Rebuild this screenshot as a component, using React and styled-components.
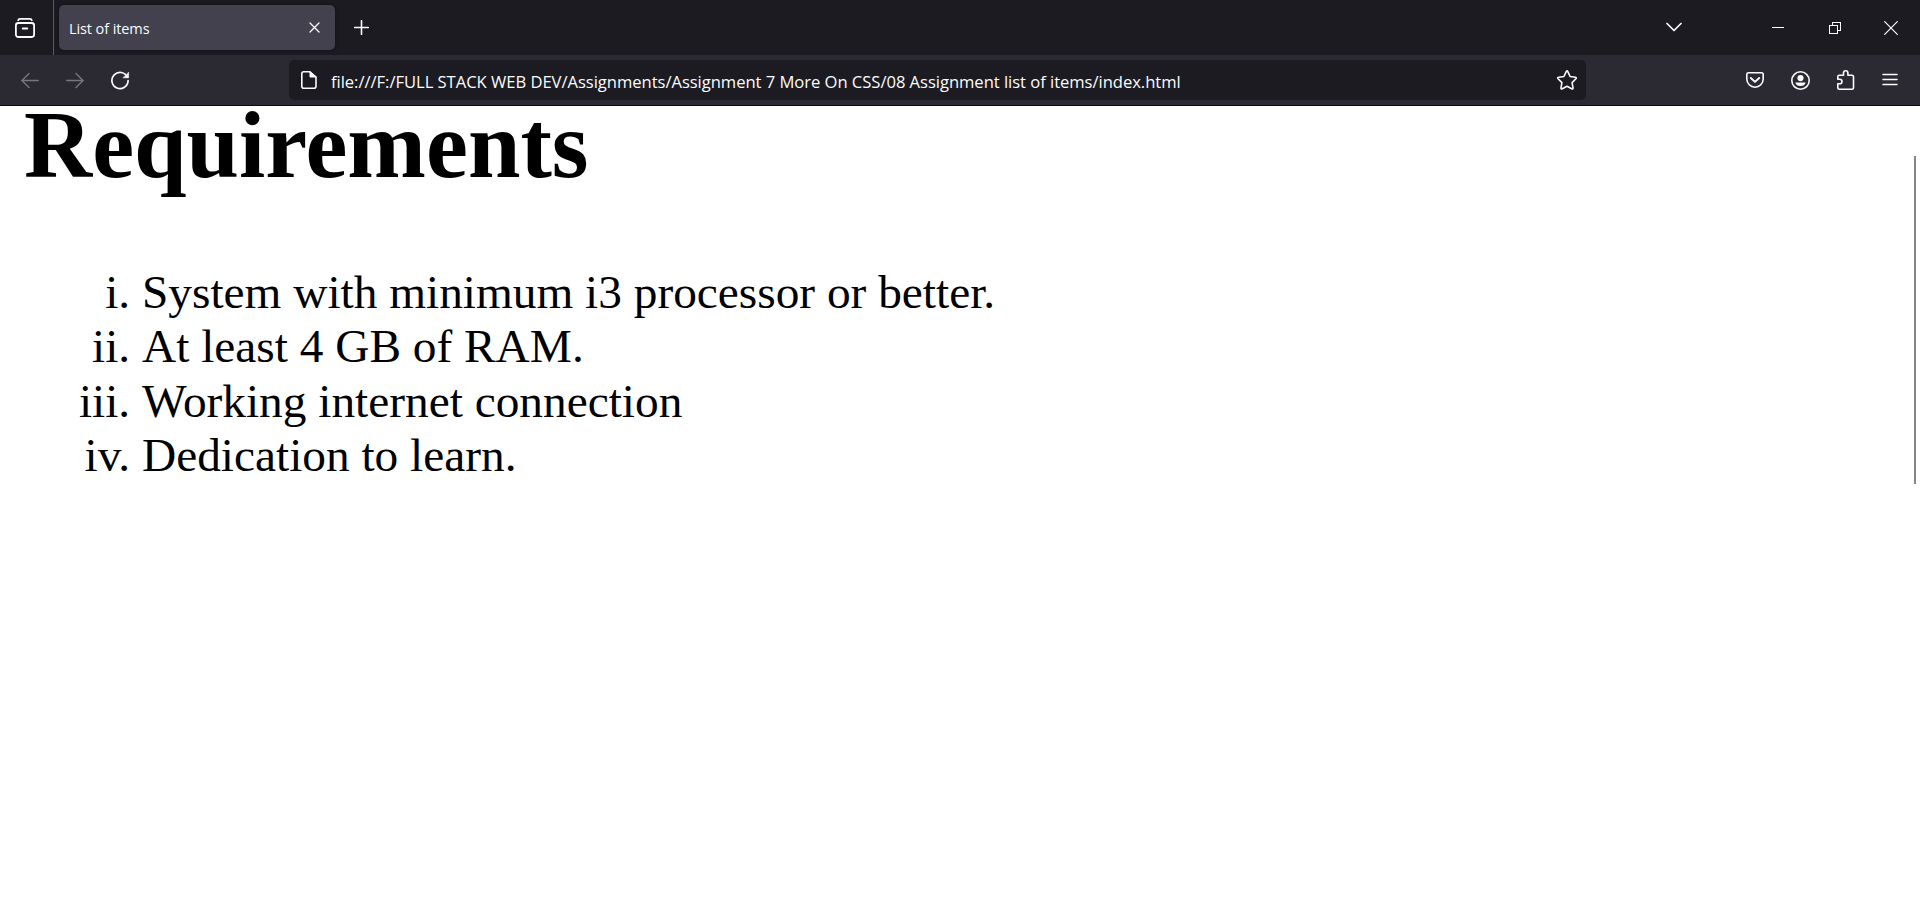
import React from "react";
import styled, { createGlobalStyle } from "styled-components";

const GlobalStyle = createGlobalStyle`
  *, *::before, *::after { box-sizing: border-box; }
  body { margin: 0; background: #fff; overflow: hidden; }
`;

const Window = styled.div`
  display: flex;
  flex-direction: column;
  width: 1920px;
  height: 908px;
  color: #fbfbfe;
  font-family: "Open Sans", "Noto Sans", sans-serif;
`;

const TabStrip = styled.header`
  display: flex;
  height: 55px;
  background: #1c1b22;
`;

const FirefoxView = styled.div`
  display: flex;
  align-items: center;
  width: 54px;
  padding-left: 15px;
  border-right: 1px solid #5b5a62;
`;

const Tab = styled.div`
  display: flex;
  align-items: center;
  justify-content: space-between;
  width: 276px;
  height: 45px;
  margin: 5px 0 0 5px;
  padding: 0 15px 0 10px;
  border-radius: 5px;
  background: #42414d;
  box-shadow: 0 0 4px rgba(0, 0, 0, 0.5);
`;

const TabTitle = styled.span`
  font-size: 14.5px;
  line-height: 20px;
  letter-spacing: -0.1px;
  padding-top: 2px;
`;

const NewTab = styled.div`
  display: flex;
  align-items: center;
  padding-left: 19px;
`;

const WindowControls = styled.div`
  display: flex;
  align-items: center;
  margin-left: auto;
  padding-right: 22px;
`;

const Control = styled.div`
  display: flex;
  margin-left: ${(p) => p.$gap || 0}px;
`;

const NavBar = styled.nav`
  display: flex;
  align-items: center;
  height: 51px;
  background: #2b2a33;
  border-bottom: 1px solid #0c0c0d;
`;

const NavButtons = styled.div`
  display: flex;
  gap: 25px;
  width: 289px;
  padding-left: 20px;
`;

const UrlBar = styled.div`
  display: flex;
  align-items: center;
  width: 1297px;
  height: 40px;
  padding: 0 8px 0 10px;
  border-radius: 5px;
  background: #1c1b22;
`;

const UrlText = styled.span`
  flex: 1;
  margin-left: 12px;
  padding-top: 3px;
  font-size: 16.6px;
  line-height: 24px;
  letter-spacing: -0.04px;
  white-space: nowrap;
`;

const ToolbarActions = styled.div`
  display: flex;
  gap: 25px;
  margin-left: auto;
  padding-right: 20px;
`;

const Page = styled.main`
  display: flex;
  justify-content: space-between;
  flex: 1;
  color: #000;
  font-family: "Liberation Serif", serif;
`;

const Content = styled.div`
  padding-left: 24px;
`;

const Heading = styled.h1`
  margin: 0;
  font-size: 94.4px;
  line-height: 78px;
  font-weight: 700;
`;

const List = styled.ol`
  margin: 81.15px 0 0;
  padding-left: 118px;
  list-style: lower-roman;
  font-size: 47.34px;
  line-height: 54.2px;
`;

const ScrollThumb = styled.div`
  width: 2px;
  height: 328px;
  margin: 50px 4px 0 0;
  background: #868686;
`;

const Glyph = styled.svg`
  display: block;
  flex: none;
  fill: none;
  stroke: ${(p) => (p.$dim ? "#77767e" : "#fbfbfe")};
  stroke-width: ${(p) => p.$weight || 1.6};
  stroke-linecap: round;
  stroke-linejoin: round;
`;

function Icon({ size = 20, children, ...rest }) {
  return (
    <Glyph width={size} height={size} viewBox={`0 0 ${size} ${size}`} {...rest}>
      {children}
    </Glyph>
  );
}

const items = [
  "System with minimum i3 processor or better.",
  "At least 4 GB of RAM.",
  "Working internet connection",
  "Dedication to learn.",
];

export default function App() {
  return (
    <>
      <GlobalStyle />
      <Window>
        <TabStrip>
          <FirefoxView>
            <Icon $weight={1.8}>
              <path d="M3.2 2.2 Q3.6.9 5 .9 H15 Q16.4.9 16.8 2.2" />
              <rect x=".9" y="5" width="18.2" height="14" rx="2.4" />
              <path d="M7.7 10.5h4.6" />
            </Icon>
          </FirefoxView>
          <Tab>
            <TabTitle>List of items</TabTitle>
            <Icon size={11} $weight={1.3}>
              <path d="M1 1l9 9M10 1L1 10" />
            </Icon>
          </Tab>
          <NewTab>
            <Icon size={15} $weight={1.6}>
              <path d="M7.5.7v13.6M.7 7.5h13.6" />
            </Icon>
          </NewTab>
          <WindowControls>
            <Control>
              <Icon size={16} $weight={1.7}>
                <path d="M1 3.5l7 7 7-7" />
              </Icon>
            </Control>
            <Control $gap={90}>
              <Icon size={12} $weight={1} shapeRendering="crispEdges">
                <path d="M0 5.5h12" strokeLinecap="butt" />
              </Icon>
            </Control>
            <Control $gap={45}>
              <Icon size={12} $weight={1} shapeRendering="crispEdges">
                <path d="M.5 3.5h8v8h-8zM3.5 3.5v-3h8v8h-3" />
              </Icon>
            </Control>
            <Control $gap={43}>
              <Icon size={14} $weight={1.2}>
                <path d="M.7.7l12.6 12.6M13.3.7L.7 13.3" />
              </Icon>
            </Control>
          </WindowControls>
        </TabStrip>
        <NavBar>
          <NavButtons>
            <Icon $dim $weight={1.4}>
              <path d="M18.3 10.5H1.7M9 3.5l-7 7 7 7" />
            </Icon>
            <Icon $dim $weight={1.4}>
              <path d="M1.7 10.5h16.6M11 3.5l7 7-7 7" />
            </Icon>
            <Icon $weight={1.7}>
              <path d="M17.4 7.2A8.1 8.1 0 1 0 18.1 10.6" />
              <path d="M18.6 2.5v5.3h-5.3z" fill="#fbfbfe" strokeWidth=".6" />
            </Icon>
          </NavButtons>
          <UrlBar>
            <Icon>
              <path d="M11 1.8H5Q3 1.8 3 3.8v12.4q0 2 2 2h10.2q2 0 2-2V7z" transform="translate(-.2 0)" />
              <path d="M11 2v5h5.8z" fill="#fbfbfe" strokeWidth="1" />
            </Icon>
            <UrlText>
              file:///F:/FULL STACK WEB DEV/Assignments/Assignment 7 More On CSS/08 Assignment list of items/index.html
            </UrlText>
            <Icon size={22} $weight={1.6}>
              <path d="M10.2 2.6q.8-1.5 1.6 0l2.3 4.9 5.3.8q1.6.3.5 1.5l-3.8 3.8.9 5.2q.2 1.7-1.3 1L11 17.3l-4.7 2.5q-1.5.7-1.3-1l.9-5.2-3.8-3.8Q1 8.6 2.6 8.3l5.3-.8z" />
            </Icon>
          </UrlBar>
          <ToolbarActions>
            <Icon>
              <path d="M3.5 2.8h13q1.7 0 1.7 1.7v4.5a8.2 8.2 0 0 1-16.4 0V4.5q0-1.7 1.7-1.7z" />
              <path d="M5.8 8L10 11.9l4.2-3.9" strokeWidth="1.9" />
            </Icon>
            <Icon>
              <circle cx="10.5" cy="10.5" r="8.7" />
              <circle cx="10.5" cy="8.1" r="3.1" fill="#fbfbfe" stroke="none" />
              <path d="M5.3 12.5h10.4q-1 3.5-5.2 3.5t-5.2-3.5z" fill="#fbfbfe" stroke="none" />
            </Icon>
            <Icon>
              <path d="M2.8 8.4V6.8q0-1.5 1.5-1.5h4.2V3a2.2 2.2 0 0 1 4.4 0v2.3h4.1q1.5 0 1.5 1.5v10.9q0 1.5-1.5 1.5H4.3q-1.5 0-1.5-1.5v-3.9H4.7a2.3 2.3 0 0 0 0-4.6H2.8z" />
            </Icon>
            <Icon $weight={1.5}>
              <path d="M3 4.5h14M3 9.5h14M3 14.5h14" />
            </Icon>
          </ToolbarActions>
        </NavBar>
        <Page>
          <Content>
            <Heading>Requirements</Heading>
            <List>
              {items.map((item) => (
                <li key={item}>{item}</li>
              ))}
            </List>
          </Content>
          <ScrollThumb />
        </Page>
      </Window>
    </>
  );
}
